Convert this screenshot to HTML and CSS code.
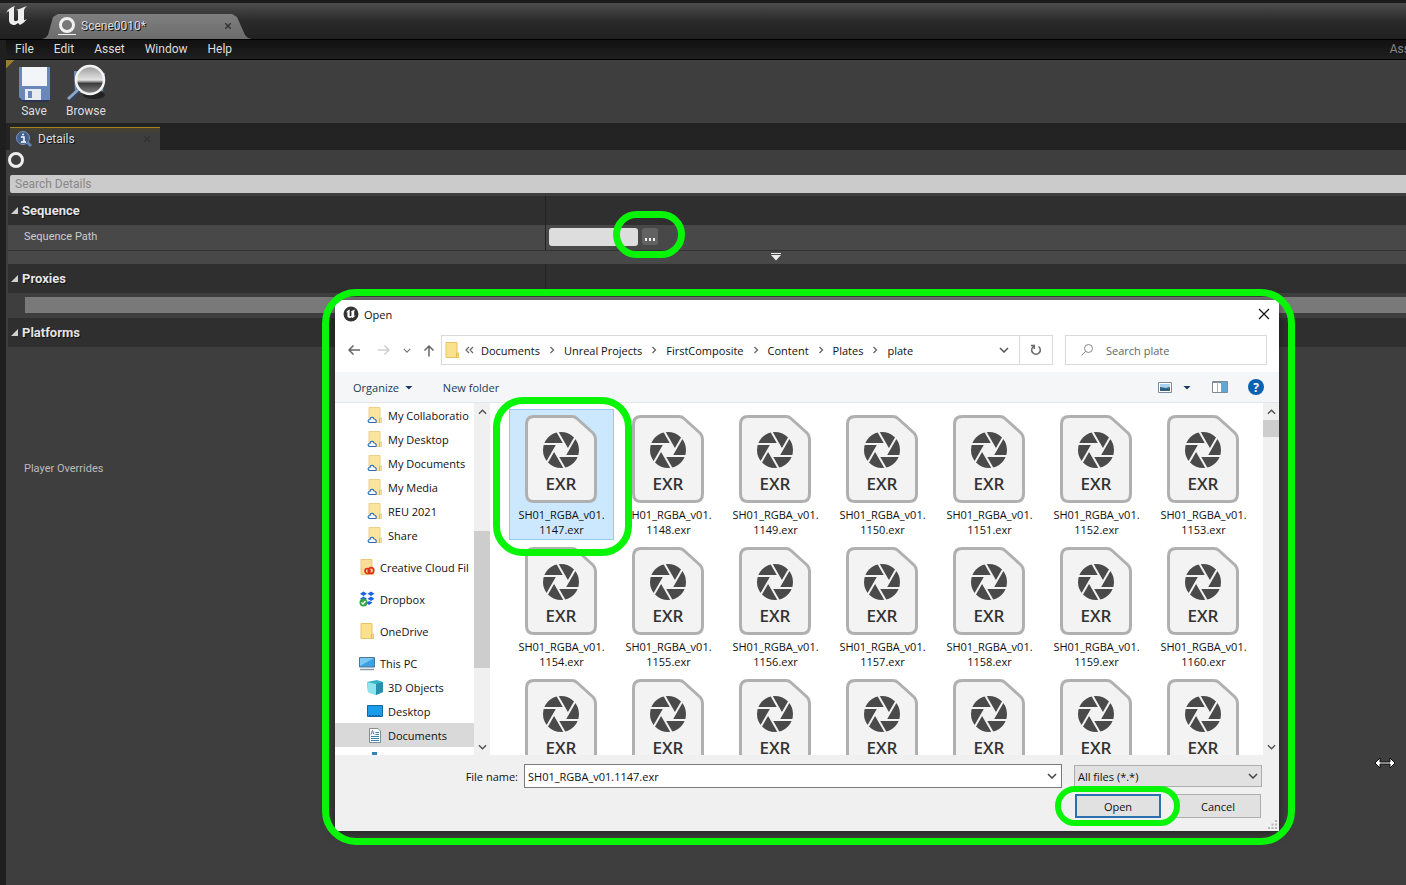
FILE: index.html
```html
<!DOCTYPE html>
<html lang="en">
<head>
<meta charset="utf-8">
<title>Scene0010</title>
<link rel="stylesheet" href="styles.css">
</head>
<body>
<svg class="defs" aria-hidden="true">
  <symbol id="ue" viewBox="0 0 22 20"><path d="M0 7C2 3 5 1 9 0C8 1 8 2 8 3V14C9 16 11 15 12 14V5C12 4 11 4 10 4C13 3 16 2 21 0C19 2 18 3 18 5V13C18 15 19 14 21 13C19 16 16 18 14 19L12 17L9 19C5 19 3 17 3 14V6C3 5 2 5 0 7Z"/></symbol>
  <symbol id="exr" viewBox="0 0 72 88">
    <path d="M9 1.5H47Q50 1.5 52 3.5L68 18Q70.500 20.500 70.500 24V79Q70.500 86.500 63 86.500H9Q1.500 86.500 1.500 79V9Q1.500 1.500 9 1.500Z" fill="#f3f3f3" stroke="#b0b0b0" stroke-width="3"/>
    <g transform="translate(36 35)"><circle r="18" fill="#4a4a4a"/><path d="M-3.300-5.700H3.300L6.600 0L3.300 5.700H-3.300L-6.600 0Z" fill="#f3f3f3"/>
    <g stroke="#f3f3f3" stroke-width="2"><path d="M4-6H-19"/><path d="M4-6H-19" transform="rotate(60)"/><path d="M4-6H-19" transform="rotate(120)"/><path d="M4-6H-19" transform="rotate(180)"/><path d="M4-6H-19" transform="rotate(240)"/><path d="M4-6H-19" transform="rotate(300)"/></g></g>
  </symbol>
  <symbol id="folder" viewBox="0 0 16 16"><path d="M2 0.500H13V11H14.500V15.500H2Z" fill="#fbe08d" stroke="#e6c463"/><path d="M12.500 11V15" stroke="#e0b84e"/></symbol>
  <symbol id="cloudfolder" viewBox="0 0 16 16"><path d="M2 0.500H13V11H14.500V15.500H2Z" fill="#fbe3a0" stroke="#ecd08a"/><path d="M12.500 11V15" stroke="#e0b84e"/><path d="M3 15.500C0.500 15.500 0.500 12.500 3 12.500C3 10 6.500 9.500 7 12C9.500 12 10 15.500 8 15.500Z" fill="#fff" stroke="#2c6fc0" stroke-width="1.200"/></symbol>
  <symbol id="down" viewBox="0 0 10 6"><path d="M1 1L5 5L9 1" fill="none" stroke="currentColor" stroke-width="1.500"/></symbol>
  <symbol id="right" viewBox="0 0 6 8"><path d="M1.500 1L4.500 4L1.500 7" fill="none" stroke="#666" stroke-width="1.300"/></symbol>
</svg>

<div class="editor">
  <header class="titlebar">
    <svg class="ue-logo" fill="#eee"><use href="#ue"/></svg>
    <div class="doc-tab">
      <svg class="tab-ring" viewBox="0 0 18 20"><circle cx="9" cy="9" r="6.500" fill="none" stroke="#f0f0f0" stroke-width="3"/><path d="M0 18.500H18" stroke="#f0f0f0"/></svg>
      <span>Scene0010*</span>
      <button class="tab-x" aria-label="Close tab"><svg viewBox="0 0 6 6"><path d="M0 0L6 6M6 0L0 6"/></svg></button>
    </div>
  </header>
  <nav class="menubar">
    <button>File</button><button>Edit</button><button>Asset</button><button>Window</button><button>Help</button>
    <span class="menu-end">Ass</span>
  </nav>
  <div class="toolbar">
    <button class="tool"><svg viewBox="0 0 40 38"><path d="M7 4H33L35 6V37L33 38H9L6 35V5Z" fill="#26344f"/><path d="M5 3H36V36H8L5 33Z" fill="#6b88bd"/><path d="M8 3H33V22H8Z" fill="#f3f5f9"/><path d="M11 25H27V36H11Z" fill="#e8ecf2"/><path d="M14 27H18V34H14Z" fill="#6b88bd"/></svg>Save</button>
    <button class="tool"><svg viewBox="0 0 40 38"><defs><linearGradient id="lens" x2="0" y2="1"><stop stop-color="#999"/><stop offset=".5" stop-color="#e4e4e4"/><stop offset=".62" stop-color="#3c3c3c"/><stop offset="1" stop-color="#8a8a8a"/></linearGradient></defs><ellipse cx="28" cy="31" rx="11" ry="4" fill="#222"/><path d="M8 7L39 9L37 27L9 29Z" fill="#6f94bb"/><path d="M14 25L3 36" stroke="#31445f" stroke-width="5"/><path d="M14 24L2 35" stroke="#8fa6c4" stroke-width="3"/><circle cx="24" cy="16" r="14" fill="url(#lens)" stroke="#f4f4f4" stroke-width="2.500"/></svg>Browse</button>
  </div>
  <div class="panel-tabs">
    <div class="panel-tab">
      <svg class="info" viewBox="0 0 16 16"><path d="M11 11L15 15" stroke="#5f83b8" stroke-width="3"/><circle cx="7" cy="7" r="6.500" fill="#41608f" stroke="#7d93b5"/><path d="M5 6H8V10.500M5 11H10M6 3.500H8" stroke="#fff" stroke-width="1.500" fill="none"/></svg>
      <span>Details</span>
      <button class="tab-x" aria-label="Close Details"><svg viewBox="0 0 6 6"><path d="M0 0L6 6M6 0L0 6"/></svg></button>
    </div>
  </div>
  <main class="details">
    <div class="object-row"><svg viewBox="0 0 16 16"><circle cx="8" cy="8" r="6.500" fill="none" stroke="#eee" stroke-width="3"/></svg></div>
    <input class="search-details" type="text" placeholder="Search Details" aria-label="Search Details">
    <section>
      <h2 class="cat split"><span><i class="tri"></i>Sequence</span></h2>
      <div class="prop split">
        <label for="seq">Sequence Path</label>
        <div class="path-edit">
          <input id="seq" type="text">
          <button class="dots" aria-label="Browse for sequence"><i></i><i></i><i></i></button>
        </div>
      </div>
      <div class="more"><button aria-label="Show advanced"><svg viewBox="0 0 10 8"><path d="M0 0.500H10" stroke="#eee"/><path d="M0 2H10L5 7.500Z" fill="#eee"/></svg></button></div>
    </section>
    <section>
      <h2 class="cat split"><span><i class="tri"></i>Proxies</span></h2>
      <div class="proxy"><div></div></div>
    </section>
    <section>
      <h2 class="cat split"><span><i class="tri"></i>Platforms</span></h2>
      <div class="overrides">Player Overrides</div>
    </section>
  </main>
  <div class="mark mark-dots"></div>
</div>

<div class="dialog" role="dialog" aria-labelledby="dlg">
  <div class="dlg-title">
    <svg class="dlg-logo" viewBox="0 0 16 16"><circle cx="8" cy="8" r="7.500" fill="#333"/><use href="#ue" x="3" y="3" width="10" height="10" fill="#fff"/></svg>
    <span id="dlg">Open</span>
    <button class="close" aria-label="Close"><svg viewBox="0 0 12 12"><path d="M1 1L11 11M11 1L1 11" stroke="#111" stroke-width="1.200"/></svg></button>
  </div>
  <div class="address">
    <button class="nav-arrow" aria-label="Back"><svg viewBox="0 0 14 12"><path d="M13 6H2M6.500 1.500L2 6L6.500 10.500"/></svg></button>
    <button class="nav-arrow off" aria-label="Forward"><svg viewBox="0 0 14 12"><path d="M1 6H12M7.500 1.500L12 6L7.500 10.500"/></svg></button>
    <button class="recent" aria-label="Recent locations"><svg><use href="#down"/></svg></button>
    <button class="up" aria-label="Up"><svg viewBox="0 0 12 13"><path d="M6 12.500V2M1.500 6.500L6 2L10.500 6.500"/></svg></button>
    <div class="crumbs">
      <svg class="ic"><use href="#folder"/></svg>
      <svg class="dbl" viewBox="0 0 9 8"><path d="M4 1L1 4L4 7M8 1L5 4L8 7" fill="none" stroke="#666" stroke-width="1.200"/></svg>
      <a href="#">Documents</a><svg class="sep"><use href="#right"/></svg><a href="#">Unreal Projects</a><svg class="sep"><use href="#right"/></svg><a href="#">FirstComposite</a><svg class="sep"><use href="#right"/></svg><a href="#">Content</a><svg class="sep"><use href="#right"/></svg><a href="#">Plates</a><svg class="sep"><use href="#right"/></svg><a href="#">plate</a>
      <button class="drop" aria-label="Previous locations"><svg><use href="#down"/></svg></button>
      <button class="refresh" aria-label="Refresh"><svg viewBox="0 0 12 12"><path d="M8.500 2.500A4.300 4.300 0 1 1 3.500 2.500M1 1.500H4.300V5"/></svg></button>
    </div>
    <div class="search-box">
      <svg viewBox="0 0 12 12"><circle cx="7.500" cy="4.500" r="4" fill="none" stroke="#888"/><path d="M4.500 7.500L0.500 11.500" stroke="#888"/></svg>
      <input type="text" placeholder="Search plate" aria-label="Search plate">
    </div>
  </div>
  <div class="commands">
    <button>Organize <i class="caret"></i></button>
    <button>New folder</button>
    <div class="views">
      <button aria-label="View"><svg class="v1" viewBox="0 0 14 11"><path d="M.5 .5H13.500V10.500H.5Z" fill="#fff" stroke="#7d8ba0"/><path d="M2 2H12V6H2Z" fill="#a8d3ee"/><path d="M2 5L8 6L12 5V9H2Z" fill="#31637f"/></svg></button>
      <button aria-label="More views"><i class="caret"></i></button>
      <button class="pane" aria-label="Preview pane"><svg viewBox="0 0 16 12"><path d="M.5 .5H15.500V11.500H.5Z" fill="#fff" stroke="#7c8a99"/><path d="M1 1.500H15" stroke="#7c8a99"/><path d="M5.500 1V11" stroke="#aab"/><path d="M9 1H15V11H9Z" fill="#5fa8dc"/></svg></button>
      <button class="help" aria-label="Help">?</button>
    </div>
  </div>
  <div class="browser">
    <ul class="tree">
      <li class="sub"><svg><use href="#cloudfolder"/></svg>My Collaboratio</li>
      <li class="sub"><svg><use href="#cloudfolder"/></svg>My Desktop</li>
      <li class="sub"><svg><use href="#cloudfolder"/></svg>My Documents</li>
      <li class="sub"><svg><use href="#cloudfolder"/></svg>My Media</li>
      <li class="sub"><svg><use href="#cloudfolder"/></svg>REU 2021</li>
      <li class="sub"><svg><use href="#cloudfolder"/></svg>Share</li>
      <li class="root"><svg viewBox="0 0 16 16"><path d="M2 0.500H13V11H14.500V15.500H2Z" fill="#fbdc9a" stroke="#ecc878"/><circle cx="8.500" cy="12" r="2.500" fill="none" stroke="#d8341c" stroke-width="1.700"/><circle cx="12" cy="11.500" r="2.800" fill="none" stroke="#d8341c" stroke-width="1.700"/></svg>Creative Cloud Fil</li>
      <li class="root"><svg viewBox="0 0 16 16"><path d="M4.500 0.500L8 2.800L4.500 5L1 2.800ZM12 0.500L15.500 2.800L12 5L8.500 2.800ZM4.500 5.500L8 7.700L4.500 10L1 7.700ZM12 5.500L15.500 7.700L12 10L8.500 7.700ZM10 10L13.500 11.500L10 14L7 12Z" fill="#1e62e6"/><circle cx="4.500" cy="11.500" r="4" fill="#35a347"/><path d="M2.500 11.500L4 13L6.500 10" fill="none" stroke="#fff" stroke-width="1.300"/></svg>Dropbox</li>
      <li class="root"><svg><use href="#folder"/></svg>OneDrive</li>
      <li class="root"><svg viewBox="0 0 16 16"><path d="M.5 2.500H15.500V12H.5Z" fill="#3ba3e4" stroke="#4a7794"/><path d="M1 3H15L1 11Z" fill="#7cc8f4"/><path d="M1 14.500H15" stroke="#8899a5" stroke-width="1.500"/></svg>This PC</li>
      <li class="sub"><svg viewBox="0 0 16 16"><path d="M0 3L10 1L16 3V13L9 16L1 13Z" fill="#35b2c6"/><path d="M0 3L9 5V16L1 13Z" fill="#8fe3ec"/><path d="M9 5L16 3V13L9 16Z" fill="#2791ad"/></svg>3D Objects</li>
      <li class="sub"><svg viewBox="0 0 16 16"><path d="M.5 2.500H15.500V13.500H.5Z" fill="#1b9cea" stroke="#17689d"/><path d="M2 12.500H14" stroke="#0b5f9e" stroke-dasharray="2 1"/></svg>Desktop</li>
      <li class="sub current"><svg viewBox="0 0 16 16"><path d="M2.500 1.500H11L13.500 4V15.500H2.500Z" fill="#fff" stroke="#7f8d96"/><path d="M4 9.500H12M4 11.500H12M4 13.500H12M8.500 5.500H12M8.500 7.500H12M4 7.500L5.500 3.500L7 7.500" stroke="#3a83ac" fill="none"/></svg>Documents</li>
      <li class="sub"><svg viewBox="0 0 16 16"><path d="M5 1H10V7H14L8 13L2 7H5Z" fill="#2c87b8"/></svg>Downloads</li>
    </ul>
    <div class="bar tree-bar"><svg><use href="#down"/></svg><div class="thumb"></div><svg><use href="#down"/></svg></div>
    <div class="files">
      <button class="file selected"><span class="icon"><svg><use href="#exr"/></svg><b>EXR</b></span>SH01_RGBA_v01.<br>1147.exr</button>
      <button class="file"><span class="icon"><svg><use href="#exr"/></svg><b>EXR</b></span>SH01_RGBA_v01.<br>1148.exr</button>
      <button class="file"><span class="icon"><svg><use href="#exr"/></svg><b>EXR</b></span>SH01_RGBA_v01.<br>1149.exr</button>
      <button class="file"><span class="icon"><svg><use href="#exr"/></svg><b>EXR</b></span>SH01_RGBA_v01.<br>1150.exr</button>
      <button class="file"><span class="icon"><svg><use href="#exr"/></svg><b>EXR</b></span>SH01_RGBA_v01.<br>1151.exr</button>
      <button class="file"><span class="icon"><svg><use href="#exr"/></svg><b>EXR</b></span>SH01_RGBA_v01.<br>1152.exr</button>
      <button class="file"><span class="icon"><svg><use href="#exr"/></svg><b>EXR</b></span>SH01_RGBA_v01.<br>1153.exr</button>
      <button class="file"><span class="icon"><svg><use href="#exr"/></svg><b>EXR</b></span>SH01_RGBA_v01.<br>1154.exr</button>
      <button class="file"><span class="icon"><svg><use href="#exr"/></svg><b>EXR</b></span>SH01_RGBA_v01.<br>1155.exr</button>
      <button class="file"><span class="icon"><svg><use href="#exr"/></svg><b>EXR</b></span>SH01_RGBA_v01.<br>1156.exr</button>
      <button class="file"><span class="icon"><svg><use href="#exr"/></svg><b>EXR</b></span>SH01_RGBA_v01.<br>1157.exr</button>
      <button class="file"><span class="icon"><svg><use href="#exr"/></svg><b>EXR</b></span>SH01_RGBA_v01.<br>1158.exr</button>
      <button class="file"><span class="icon"><svg><use href="#exr"/></svg><b>EXR</b></span>SH01_RGBA_v01.<br>1159.exr</button>
      <button class="file"><span class="icon"><svg><use href="#exr"/></svg><b>EXR</b></span>SH01_RGBA_v01.<br>1160.exr</button>
      <button class="file"><span class="icon"><svg><use href="#exr"/></svg><b>EXR</b></span></button>
      <button class="file"><span class="icon"><svg><use href="#exr"/></svg><b>EXR</b></span></button>
      <button class="file"><span class="icon"><svg><use href="#exr"/></svg><b>EXR</b></span></button>
      <button class="file"><span class="icon"><svg><use href="#exr"/></svg><b>EXR</b></span></button>
      <button class="file"><span class="icon"><svg><use href="#exr"/></svg><b>EXR</b></span></button>
      <button class="file"><span class="icon"><svg><use href="#exr"/></svg><b>EXR</b></span></button>
      <button class="file"><span class="icon"><svg><use href="#exr"/></svg><b>EXR</b></span></button>
    </div>
    <div class="bar file-bar"><svg><use href="#down"/></svg><div class="thumb"></div><svg><use href="#down"/></svg></div>
    <div class="mark mark-file"></div>
  </div>
  <div class="footer">
    <div class="name-row">
      <label for="fname">File name:</label>
      <div class="combo"><input id="fname" type="text" value="SH01_RGBA_v01.1147.exr"><button aria-label="Recent names"><svg><use href="#down"/></svg></button></div>
      <div class="filter"><select aria-label="File type"><option>All files (*.*)</option></select><svg><use href="#down"/></svg></div>
    </div>
    <div class="actions"><button class="primary">Open</button><button>Cancel</button></div>
    <svg class="grip" viewBox="0 0 9 9"><path d="M7 0H9V2H7ZM7 3.500H9V5.500H7ZM7 7H9V9H7ZM3.500 3.500H5.500V5.500H3.500ZM3.500 7H5.500V9H3.500ZM0 7H2V9H0Z" fill="#b8b8b8"/></svg>
    <div class="mark mark-open"></div>
  </div>
  <div class="mark mark-dialog"></div>
</div>
<svg class="cursor" viewBox="0 0 22 12"><path d="M1 6L6 1V5H16V1L21 6L16 11V7H6V11Z" fill="#fff" stroke="#111"/></svg>
</body>
</html>
```
FILE: styles.css
```css
* { box-sizing: border-box; }
body { margin: 0; background: #3e3e3e; font: 12px/16px Roboto, sans-serif; }
button { border: 0; padding: 0; background: none; color: inherit; font: inherit; }
input, select { font: inherit; border: 0; padding: 0; min-width: 0; border-radius: 0; outline: 0; }
svg { display: block; flex: none; }
.defs { position: absolute; width: 0; height: 0; }

/* Editor window */
.editor { position: relative; min-height: 100vh; padding-left: 6px; overflow: hidden; background: #3e3e3e; box-shadow: inset 6px 0 #1f1f1f; color: #ddd; text-shadow: 1px 1px 0 #111; }
.titlebar { display: flex; align-items: flex-start; height: 40px; margin-left: -6px; border-top: 3px solid #1b1b1b; border-bottom: 1px solid #000; background: linear-gradient(#4d4d4d, #2a2a2a 50%, #202020); }
.ue-logo { width: 22px; height: 20px; margin: 3px 0 0 6px; }
.doc-tab { display: flex; align-items: center; width: 210px; height: 25px; margin: 11px 0 0 14px; padding: 0 21px 2px 16px; background: linear-gradient(#7f7f7f, #6c6c6c); clip-path: polygon(0 100%, 3px 96%, 6px 84%, 11px 12%, 16px 0, 190px 0, 195px 12%, 203px 84%, 206px 96%, 100% 100%); }
.tab-ring { width: 18px; height: 20px; margin-right: 5px; }
.tab-x { margin-left: auto; }
.tab-x svg { width: 6px; height: 6px; stroke: #333; stroke-width: 1.5; }
.menubar { display: flex; align-items: center; gap: 20px; height: 20px; padding: 0 0 2px 9px; border-bottom: 1px solid #000; background: linear-gradient(#111, #1f1f1f); white-space: nowrap; }
.menu-end { margin: 0 -4px 0 auto; color: #888; }
.toolbar { display: flex; gap: 12px; height: 63px; padding: 4px 0 0 8px; background: linear-gradient(135deg, #9a7d2a 6px, transparent 6px) #3e3e3e; }
.tool { display: flex; flex-direction: column; align-items: center; width: 40px; }
.tool svg { width: 40px; height: 38px; margin-bottom: 1px; }
.panel-tabs { height: 27px; padding: 4px 0 0 4px; background: #232323; }
.panel-tab { display: flex; align-items: center; gap: 6px; width: 150px; height: 23px; padding: 0 10px 0 6px; border-top: 1px solid #a08324; background: linear-gradient(#48422e, #3e3e3e 6px); }
.info { width: 16px; height: 16px; }
.details { padding-left: 2px; }
.object-row { height: 25px; padding-top: 2px; }
.object-row svg { width: 16px; height: 16px; }
.search-details { display: block; width: calc(100% - 2px); height: 18px; margin: 0 0 3px 2px; padding: 0 5px; background: #cbcbcb; color: #222; border-radius: 2px 0 0 2px; }
.search-details::placeholder { color: #888; opacity: 1; text-shadow: none; }
.split { display: grid; grid-template-columns: 538px 1fr; align-items: center; background: linear-gradient(#222, #222) 537px 0 / 1px 100% no-repeat #2f2f2f; }
.cat { height: 29px; margin: 0; font-size: 13px; font-weight: 700; color: #e4e4e4; }
.cat span { display: flex; align-items: center; gap: 4px; padding-left: 3px; }
.tri { width: 7px; height: 7px; background: #d0d0d0; clip-path: polygon(100% 0, 100% 100%, 0 100%); }
.prop { height: 25px; padding: 0 0 2px 16px; background-color: #484848; color: #ccc; font-size: 11px; text-shadow: none; grid-template-columns: 525px 1fr; }
.path-edit { display: flex; align-items: center; gap: 4px; }
.path-edit input { width: 89px; height: 18px; border-radius: 3px; background: #ddd; }
.dots { display: flex; align-items: flex-end; justify-content: center; gap: 2px; width: 16px; height: 17px; padding-bottom: 4px; border-radius: 3px; background: #626262; }
.dots i { width: 2px; height: 3px; background: #eee; }
.more { height: 14px; padding: 2px 0 0 763px; border-top: 1px solid #333; background: #484848; }
.more button, .more svg { display: block; width: 10px; height: 8px; }
.proxy { height: 25px; padding: 4px 0 0 17px; }
.proxy div { height: 16px; background: #797979; }
.overrides { padding: 114px 16px; color: #bbb; font-size: 11px; text-shadow: none; }

/* Highlight rings */
.mark { position: absolute; border: 7px solid #08f508; pointer-events: none; }
.mark-dots { left: 613px; top: 211px; width: 72px; height: 47px; border-radius: 24px; }
.mark-file { left: 158px; top: -6px; width: 139px; height: 159px; border-radius: 30px; }
.mark-open { right: 99px; bottom: 5px; width: 125px; height: 40px; border-width: 6px; border-radius: 20px; }
.mark-dialog { inset: -11px -16px -14px -13px; border-radius: 34px; }

/* File dialog */
.dialog { position: absolute; left: 335px; right: 127px; top: 300px; background: #fff; color: #111; font: 11px/15px "Open Sans", "Noto Sans", sans-serif; box-shadow: 0 2px 10px rgba(0,0,0,.5); }
.dlg-title { display: flex; align-items: center; gap: 5px; height: 28px; padding: 0 9px 0 8px; }
.dlg-logo { width: 16px; height: 16px; }
.close { margin-left: auto; }
.close svg { width: 12px; height: 12px; }
.address { display: flex; align-items: center; height: 44px; padding: 0 12px; }
.address button svg { fill: none; stroke: #666; stroke-width: 1.5; }
.nav-arrow { width: 30px; }
.nav-arrow.off { width: 26px; }
.nav-arrow svg { width: 14px; height: 12px; }
.address .off svg { stroke: #d0d0d0; }
.recent { width: 20px; color: #777; }
.recent svg { width: 8px; height: 5px; }
.up { width: 18px; }
.up svg { width: 12px; height: 13px; }
.crumbs { display: flex; flex: 1; align-items: center; height: 30px; border: 1px solid #d9d9d9; white-space: nowrap; }
.crumbs a { color: #111; text-decoration: none; }
.ic { width: 16px; height: 16px; margin-left: 2px; }
.dbl { width: 9px; height: 8px; margin: 0 7px 0 5px; }
.sep { width: 6px; height: 8px; margin: 0 9px; }
.drop { margin-left: auto; padding-right: 10px; color: #555; }
.drop svg { width: 10px; height: 6px; }
.refresh { display: grid; place-items: center; width: 33px; height: 28px; border-left: 1px solid #d9d9d9; }
.refresh svg { width: 12px; height: 12px; }
.search-box { display: flex; align-items: center; gap: 13px; width: 202px; height: 30px; margin-left: 12px; padding-left: 15px; border: 1px solid #d9d9d9; }
.search-box svg { width: 12px; height: 12px; }
.search-box input { flex: 1; }
.search-box input::placeholder { color: #666; opacity: 1; }
.commands { display: flex; align-items: center; gap: 30px; height: 31px; padding: 0 15px 0 18px; background: #f5f6f8; border-bottom: 1px solid #e3e5e8; color: #1e395b; }
.caret { display: inline-block; width: 8px; height: 4px; margin-left: 3px; vertical-align: 2px; background: #1e395b; clip-path: polygon(0 0, 100% 0, 50% 100%); }
.views { display: flex; align-items: center; margin-left: auto; }
.v1 { width: 14px; height: 11px; margin-right: 8px; }
.pane { margin: 0 20px 0 21px; }
.pane svg { width: 16px; height: 12px; }
.help { width: 16px; height: 16px; border-radius: 50%; background: #0c61b0; color: #fff; font-size: 12px; font-weight: 700; }
.browser { position: relative; display: flex; height: 352px; }
.tree { flex: none; width: 139px; margin: 0; padding: 0; list-style: none; overflow: hidden; white-space: nowrap; }
.tree li { display: flex; align-items: center; gap: 5px; height: 24px; }
.tree svg { width: 16px; height: 16px; }
.sub { padding-left: 32px; }
.root { padding-left: 24px; margin-top: 8px; }
.tree .current { background: #d9d9d9; }
.bar { display: flex; flex: none; flex-direction: column; align-items: center; width: 16px; padding: 6px 0 5px; background: #f0f0f0; color: #505050; }
.bar svg { width: 9px; height: 6px; }
.bar svg:first-child { transform: rotate(180deg); }
.bar svg:last-child { margin-top: auto; }
.thumb { width: 16px; background: #cdcdcd; }
.tree-bar .thumb { height: 137px; margin-top: 116px; }
.file-bar .thumb { height: 17px; margin-top: 5px; }
.files { display: grid; flex: 1; grid-template-columns: repeat(auto-fill, 105px); grid-auto-rows: 131px; gap: 1px 2px; padding: 6px 0 0 19px; overflow: hidden; }
.file { display: flex; flex-direction: column; align-items: center; border: 1px solid transparent; padding-top: 5px; }
.file.selected { background: #cce8ff; border-color: #99c9ef; }
.icon { display: grid; flex: none; width: 72px; height: 88px; margin: 0 1px 4px 0; }
.icon svg, .icon b { grid-area: 1 / 1; }
.icon svg { width: 72px; height: 88px; }
.icon b { align-self: end; padding-bottom: 9px; font-size: 17px; line-height: 20px; font-weight: 600; color: #333; }
.footer { position: relative; height: 76px; padding: 9px 17px 0 0; background: #f0f0f0; }
.name-row { display: flex; align-items: center; height: 24px; }
.name-row label { width: 183px; margin-right: 6px; text-align: right; }
.combo { display: flex; align-items: center; flex: 1; height: 24px; padding: 0 4px 0 3px; border: 1px solid #7a7a7a; background: #fff; color: #444; }
.combo input { flex: 1; color: #111; }
.combo svg, .filter svg { width: 10px; height: 6px; }
.filter { display: grid; align-items: center; width: 188px; height: 22px; margin-left: 12px; }
.filter select, .filter svg { grid-area: 1 / 1; }
.filter select { appearance: none; width: 100%; height: 22px; padding: 0 3px; border: 1px solid #adadad; background: #e1e1e1; color: #111; }
.filter svg { justify-self: end; margin-right: 4px; color: #444; pointer-events: none; }
.actions { display: flex; justify-content: flex-end; gap: 14px; padding: 6px 1px 0 0; }
.actions button { width: 86px; height: 24px; border: 1px solid #adadad; background: #e1e1e1; }
.actions .primary { border: 2px solid #2a6fae; }
.grip { position: absolute; right: 2px; bottom: 2px; width: 9px; height: 9px; }
.cursor { position: absolute; left: 1374px; top: 757px; width: 22px; height: 12px; }
```
